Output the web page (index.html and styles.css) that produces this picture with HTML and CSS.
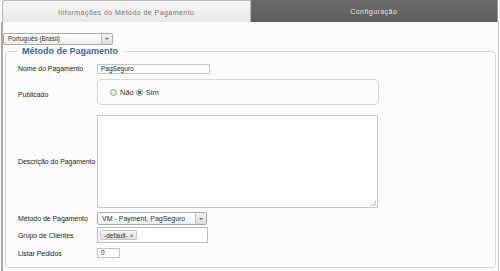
FILE: index.html
```html
<!DOCTYPE html>
<html>
<head>
<meta charset="utf-8">
<link rel="stylesheet" href="styles.css">
</head>
<body>
<div class="tabs">
  <div class="tab tab-active">Informações do Método de Pagamento</div>
  <div class="tab tab-dark">Configuração</div>
</div>
<div class="panel">
  <div class="lang">
    <span class="select-text">Português (Brasil)</span>
    <span class="select-arrow"><span class="caret"></span></span>
  </div>
  <div class="fieldset">
    <div class="legend">Método de Pagamento</div>
    <div class="row row-name">
      <div class="label">Nome do Pagamento</div>
      <div class="input input-name">PagSeguro</div>
    </div>
    <div class="row row-pub">
      <div class="label">Publicado</div>
      <div class="radiobox">
        <span class="radio"></span><span class="rlabel">Não</span>
        <span class="radio radio-on"></span><span class="rlabel">Sim</span>
      </div>
    </div>
    <div class="row row-desc">
      <div class="label">Descrição do Pagamento</div>
      <div class="textarea"><span class="grip"></span></div>
    </div>
    <div class="row row-method">
      <div class="label">Método de Pagamento</div>
      <div class="select select-method">
        <span class="select-text">VM - Payment, PagSeguro</span>
        <span class="select-arrow"><span class="caret"></span></span>
      </div>
    </div>
    <div class="row row-group">
      <div class="label">Grupo de Clientes</div>
      <div class="multibox"><span class="chip">-default- <span class="x">×</span></span></div>
    </div>
    <div class="row row-list">
      <div class="label">Listar Pedidos</div>
      <div class="input input-list">0</div>
    </div>
  </div>
</div>
</body>
</html>
```
FILE: styles.css
```css
* { box-sizing: border-box; }
html, body { margin: 0; padding: 0; }
body {
  width: 500px;
  height: 271px;
  overflow: hidden;
  font-family: "Liberation Sans", Arial, sans-serif;
  background: #fbfcfb;
  color: #333;
}
.tabs {
  display: flex;
  height: 22px;
  padding-left: 2px;
  padding-right: 2px;
}
.tab {
  flex: 1;
  display: flex;
  align-items: center;
  justify-content: center;
  font-size: 7px;
  letter-spacing: 0.45px;
  padding-top: 1px;
}
.tab-active {
  background: linear-gradient(#f6f6f4, #e9e9e6);
  border: 1px solid #b8b8b8;
  border-bottom: none;
  border-top-left-radius: 3px;
  color: #777;
}
.tab-dark {
  background: linear-gradient(#6a6a6a, #5e5e5e);
  color: #e4e4e4;
  border-right: 1px solid #999;
}
.panel {
  height: 249px;
  margin-left: 1px;
  margin-right: 1px;
  border-left: 2px solid #a9a9a9;
  border-right: 1px solid #c8c8c8;
  padding: 11px 0 0 0;
}
.lang {
  display: flex;
  width: 110px;
  height: 12px;
  border: 1px solid #aaa;
  border-radius: 2px;
  background: linear-gradient(#ffffff, #eeeeee);
}
.select-text {
  flex: 1;
  font-size: 6.5px;
  line-height: 10px;
  padding-left: 4px;
  color: #333;
}
.select-arrow {
  width: 11px;
  border-left: 1px solid #c4c4c4;
  display: flex;
  align-items: center;
  justify-content: center;
  background: linear-gradient(#f2f2f2, #dcdcdc);
}
.caret {
  width: 0;
  height: 0;
  border-left: 2px solid transparent;
  border-right: 2px solid transparent;
  border-top: 2px solid #666;
}
.fieldset {
  position: relative;
  margin: 6px 2px 0 2px;
  height: 217px;
  border: 1px solid #d6d6d6;
  border-radius: 4px;
  padding: 10px 0 0 12px;
}
.legend {
  position: absolute;
  top: -6px;
  left: 11px;
  padding: 0 5px;
  background: #fbfcfb;
  color: #2d6bb4;
  font-weight: bold;
  font-size: 9px;
  line-height: 11px;
}
.row {
  display: flex;
  align-items: center;
}
.label {
  width: 79px;
  font-size: 6.9px;
  color: #222;
  white-space: nowrap;
}
.input {
  background: #fff;
  border: 1px solid #c4c4c4;
  font-size: 6.5px;
  line-height: 8px;
  padding-left: 3px;
  color: #222;
}
.row-name { height: 13px; }
.input-name { width: 113px; height: 10px; }
.row-pub { margin-top: 4px; }
.radiobox {
  width: 282px;
  height: 26px;
  border: 1px solid #d6d6d6;
  border-radius: 4px;
  display: flex;
  align-items: center;
  padding-left: 12px;
  font-size: 7.5px;
  color: #333;
}
.row-pub .label { padding-top: 4px; }
.radio {
  width: 7px;
  height: 7px;
  border-radius: 50%;
  border: 1px solid #9a9a9a;
  background: radial-gradient(circle, #f8f8f8 0, #d8d8d8 100%);
  margin-right: 3px;
}
.radio-on {
  background: radial-gradient(circle, #2a4f7a 0, #4a78a8 40%, #e4e4e4 55%);
  margin-left: 1px;
}
.rlabel { margin-right: 1px; }
.row-desc { margin-top: 10px; }
.textarea {
  position: relative;
  width: 281px;
  height: 93px;
  background: #fff;
  border: 1px solid #c8c8c8;
}
.grip {
  position: absolute;
  right: 1px;
  bottom: 1px;
  width: 5px;
  height: 5px;
  background: linear-gradient(135deg, transparent 50%, #b0b0b0 50%, #b0b0b0 60%, transparent 60%, transparent 75%, #b0b0b0 75%, #b0b0b0 85%, transparent 85%);
}
.row-method { margin-top: 4px; }
.select-method {
  display: flex;
  width: 110px;
  height: 13px;
  border: 1px solid #aaa;
  border-radius: 2px;
  background: linear-gradient(#ffffff, #eeeeee);
}
.select-method .select-text { font-size: 7px; line-height: 11px; }
.row-group { margin-top: 2px; }
.multibox {
  width: 111px;
  height: 16px;
  background: #fff;
  border: 1px solid #bbb;
  padding: 2px;
  display: flex;
}
.chip {
  font-size: 6.5px;
  line-height: 9px;
  padding: 0 3px;
  border: 1px solid #c4c4c4;
  border-radius: 2px;
  background: linear-gradient(#f4f4f4, #e2e2e2);
  color: #333;
}
.x { color: #666; }
.row-list { margin-top: 5px; }
.input-list { width: 23px; height: 10px; }
```
